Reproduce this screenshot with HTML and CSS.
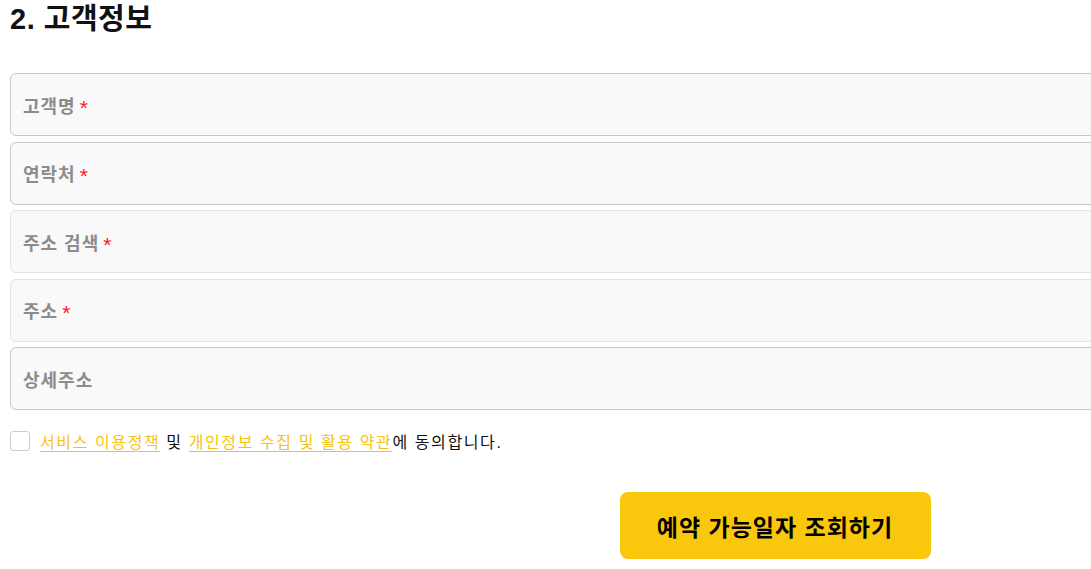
FILE: index.html
```html
<!DOCTYPE html>
<html lang="ko">
<head>
<meta charset="utf-8">
<link rel="stylesheet" href="styles.css">
</head>
<body>
<div class="page">
  <h2 class="title">2. 고객정보</h2>
  <div class="fields">
    <div class="field"><span class="label">고객명</span><span class="req">*</span></div>
    <div class="field"><span class="label">연락처</span><span class="req">*</span></div>
    <div class="field field-readonly"><span class="label">주소 검색</span><span class="req">*</span></div>
    <div class="field field-readonly"><span class="label">주소</span><span class="req">*</span></div>
    <div class="field"><span class="label">상세주소</span></div>
  </div>
  <label class="agree">
    <span class="check"></span>
    <span class="agree-text"><a class="link">서비스 이용정책</a> 및 <a class="link">개인정보 수집 및 활용 약관</a>에 동의합니다.</span>
  </label>
  <div class="actions">
    <button class="submit">예약 가능일자 조회하기</button>
  </div>
</div>
</body>
</html>
```

FILE: styles.css
```css
html, body {
  margin: 0;
  padding: 0;
  overflow: hidden;
  background: #ffffff;
}
body {
  font-family: "Liberation Sans", "Noto Sans CJK KR", sans-serif;
  color: #000;
}
.page {
  width: 1530px;
  padding: 0 10px;
}
.title {
  margin: 0 0 35px 0;
  font-size: 29px;
  line-height: 38px;
  letter-spacing: 0.5px;
  font-weight: bold;
  color: #111;
}
.fields {
  display: flex;
  flex-direction: column;
  gap: 5.5px;
}
.field {
  height: 61px;
  box-sizing: content-box;
  border: 1px solid #c9c9c9;
  border-radius: 6px;
  background: #f9f9f9;
  display: flex;
  align-items: center;
  padding-left: 12px;
  gap: 4px;
}
.field-readonly {
  border-color: #e4e4e4;
}
.label {
  font-size: 18px;
  letter-spacing: 1px;
  font-weight: bold;
  color: #8c8c8c;
}
.req {
  font-size: 21px;
  font-weight: normal;
  color: #ff1a1a;
  position: relative;
  top: 3px;
}
.agree {
  display: flex;
  align-items: center;
  gap: 10px;
  margin-top: 20px;
  height: 22px;
}
.check {
  width: 18px;
  height: 18px;
  border: 1px solid #cccccc;
  border-radius: 3px;
  background: #fff;
  flex: none;
}
.agree-text {
  font-size: 16px;
  letter-spacing: 1.6px;
  color: #111;
}
.link {
  color: #f7c310;
  text-decoration: underline;
  text-underline-offset: 3px;
}
.actions {
  display: flex;
  justify-content: center;
  margin-top: 40px;
}
.submit {
  width: 311px;
  height: 67px;
  border: none;
  border-radius: 8px;
  background: #f9c70b;
  font-family: "Liberation Sans", "Noto Sans CJK KR", sans-serif;
  font-size: 23px;
  letter-spacing: 1px;
  font-weight: bold;
  color: #000;
}
```
